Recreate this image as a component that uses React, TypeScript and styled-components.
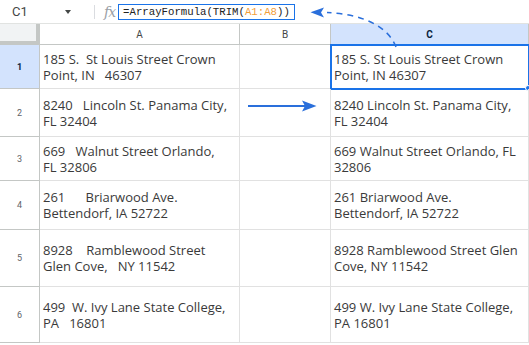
import React from "react";
import styled, { createGlobalStyle } from "styled-components";

const GlobalStyle = createGlobalStyle`
	html, body {
		margin: 0;
		padding: 0;
		background: #fff;
		overflow: hidden;
	}
`;

const Page = styled.div`
	position: relative;
	width: 529px;
	height: 345px;
	overflow: hidden;
	font-family: "Open Sans", "Liberation Sans", sans-serif;
`;

const FormulaBar = styled.div`
	display: flex;
	align-items: center;
	height: 23px;
	border-bottom: 1px solid #e1e3e1;
	font-family: Roboto, "Liberation Sans", sans-serif;
`;

const NameBox = styled.div`
	display: flex;
	align-items: center;
	justify-content: space-between;
	width: 82px;
	padding: 0 11px 0 12px;
	box-sizing: border-box;
	font-size: 13px;
	color: #444746;
`;

const Caret = styled.span`
	width: 0;
	height: 0;
	border-left: 3.5px solid transparent;
	border-right: 3.5px solid transparent;
	border-top: 4px solid #444746;
`;

const Divider = styled.span`
	width: 1px;
	height: 14px;
	margin-left: 12px;
	background: #dadce0;
`;

const FxMark = styled.span`
	margin: 0 3px 0 9px;
	font-family: "DejaVu Serif", "Liberation Serif", serif;
	font-style: italic;
	font-size: 14px;
	color: #9aa0a6;
	letter-spacing: -1px;
`;

const FormulaBox = styled.div`
	height: 16px;
	width: 177px;
	box-sizing: border-box;
	border: 1.5px solid #1a73e8;
	padding: 0 0 0 4px;
	display: flex;
	align-items: center;
	font-family: "Liberation Mono", "DejaVu Sans Mono", monospace;
	font-size: 10.7px;
	color: #222;
	white-space: pre;
`;

const RangeRef = styled.span`
	color: #f29d38;
`;

const Sheet = styled.div`
	display: grid;
	grid-template-columns: 40px 200px 91px 198px;
	grid-template-rows: 21px 44px 48px 44px 49px 57px 56px;
`;

const Corner = styled.div`
	background: #f1f3f4;
	border-right: 4px solid #c4c7c5;
	border-bottom: 4px solid #c4c7c5;
	box-sizing: border-box;
`;

const ColHeader = styled.div<{ $active?: boolean }>`
	display: flex;
	align-items: center;
	justify-content: center;
	box-sizing: border-box;
	border-right: 1px solid #c4c7c5;
	border-bottom: 1px solid #c4c7c5;
	background: ${(p) => (p.$active ? "#d3e3fd" : "#fff")};
	color: ${(p) => (p.$active ? "#0b1f3f" : "#444746")};
	font-family: Roboto, "Liberation Sans", sans-serif;
	font-size: 10px;
	font-weight: ${(p) => (p.$active ? 700 : 400)};
`;

const RowHeader = styled.div<{ $active?: boolean }>`
	display: flex;
	align-items: center;
	justify-content: center;
	box-sizing: border-box;
	border-right: 1px solid #c4c7c5;
	border-bottom: 1px solid #c4c7c5;
	background: ${(p) => (p.$active ? "#d3e3fd" : "#fff")};
	color: ${(p) => (p.$active ? "#0b1f3f" : "#5f6368")};
	font-family: Roboto, "Liberation Sans", sans-serif;
	font-size: 9px;
	font-weight: ${(p) => (p.$active ? 700 : 400)};
`;

const Cell = styled.div<{ $selected?: boolean }>`
	position: relative;
	display: flex;
	flex-direction: column;
	justify-content: center;
	box-sizing: border-box;
	padding: 0 3px;
	border-right: 1px solid #e1e1e1;
	border-bottom: 1px solid #e1e1e1;
	font-size: 13px;
	line-height: 16px;
	color: #3a3a3a;
	white-space: pre;
	outline: ${(p) => (p.$selected ? "2px solid #1a73e8" : "none")};
	outline-offset: -1px;

	&::after {
		content: "";
		display: ${(p) => (p.$selected ? "block" : "none")};
		position: absolute;
		right: -3px;
		bottom: -3px;
		width: 6px;
		height: 6px;
		border-radius: 50%;
		background: #1a73e8;
		border: 1px solid #fff;
		box-sizing: border-box;
	}
`;

const Overlay = styled.svg`
	position: absolute;
	left: 0;
	top: 0;
	pointer-events: none;
`;

const rows: { a: string[]; c: string[]; h: number }[] = [
	{ a: ["185 S.  St Louis Street Crown", "Point, IN   46307"], c: ["185 S. St Louis Street Crown", "Point, IN 46307"], h: 1 },
	{ a: ["8240   Lincoln St. Panama City,", "FL 32404"], c: ["8240 Lincoln St. Panama City,", "FL 32404"], h: 2 },
	{ a: ["669   Walnut Street Orlando,", "FL 32806"], c: ["669 Walnut Street Orlando, FL", "32806"], h: 3 },
	{ a: ["261      Briarwood Ave.", "Bettendorf, IA 52722"], c: ["261 Briarwood Ave.", "Bettendorf, IA 52722"], h: 4 },
	{ a: ["8928    Ramblewood Street", "Glen Cove,   NY 11542"], c: ["8928 Ramblewood Street Glen", "Cove, NY 11542"], h: 5 },
	{ a: ["499  W. Ivy Lane State College,", "PA   16801"], c: ["499 W. Ivy Lane State College,", "PA 16801"], h: 6 },
];

const Lines: React.FC<{ lines: string[] }> = ({ lines }) => (
	<>
		{lines.map((l, i) => (
			<span key={i}>{l}</span>
		))}
	</>
);

const App: React.FC = () => {
	return (
		<Page>
			<GlobalStyle />
			<FormulaBar>
				<NameBox>
					<span>C1</span>
					<Caret />
				</NameBox>
				<Divider />
				<FxMark>fx</FxMark>
				<FormulaBox>
					=ArrayFormula(TRIM(<RangeRef>A1:A8</RangeRef>))
				</FormulaBox>
			</FormulaBar>

			<Sheet>
				<Corner />
				<ColHeader>A</ColHeader>
				<ColHeader>B</ColHeader>
				<ColHeader $active>C</ColHeader>

				{rows.map((r) => (
					<React.Fragment key={r.h}>
						<RowHeader $active={r.h === 1}>{r.h}</RowHeader>
						<Cell>
							<Lines lines={r.a} />
						</Cell>
						<Cell />
						<Cell $selected={r.h === 1}>
							<Lines lines={r.c} />
						</Cell>
					</React.Fragment>
				))}
			</Sheet>

			<Overlay width="529" height="345" viewBox="0 0 529 345">
				<path
					d="M396 47 C 388 26, 362 14, 327 12.5"
					fill="none"
					stroke="#2a6fdb"
					strokeWidth="1.5"
					strokeDasharray="6 5"
				/>
				<path d="M310.5 12.3 L324 7.5 L321 12.5 L324 17.5 Z" fill="#2a6fdb" />
				<line x1="248" y1="106" x2="306" y2="106" stroke="#2a6fdb" strokeWidth="2" />
				<path d="M316.5 106 L302 100.5 L305 106 L302 111.5 Z" fill="#2a6fdb" />
			</Overlay>
		</Page>
	);
};

export default App;
